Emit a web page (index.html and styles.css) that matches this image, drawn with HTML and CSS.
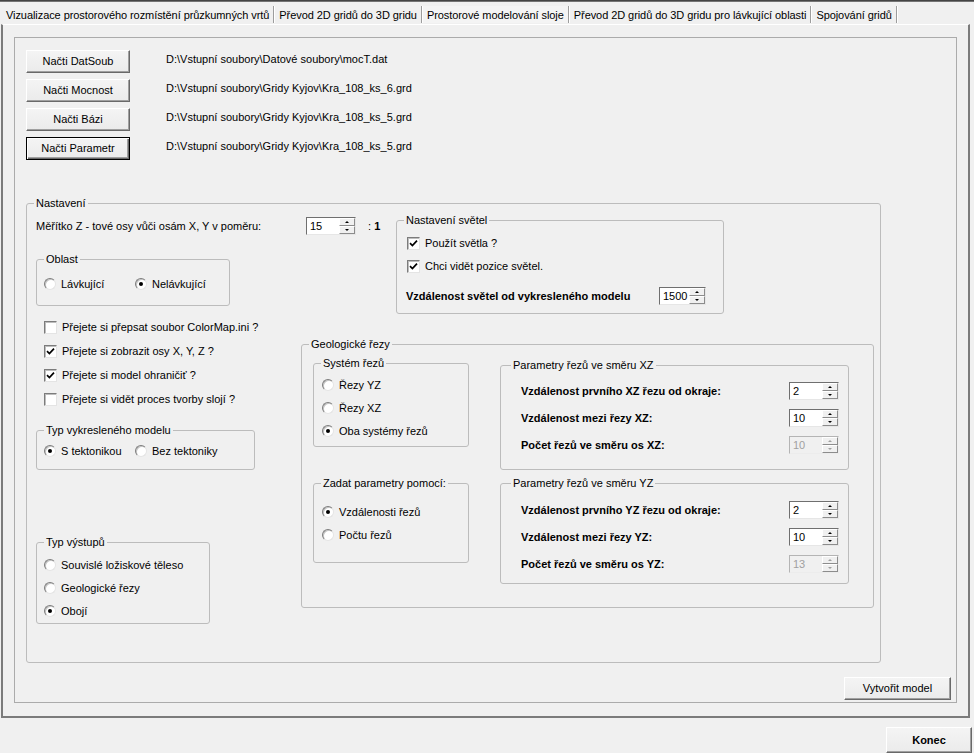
FILE: index.html
```html
<!DOCTYPE html>
<html lang="cs">
<head>
<meta charset="utf-8">
<title>Prostorové modelování sloje</title>
<link rel="stylesheet" href="styles.css">
</head>
<body>
<div class="topbar"></div>
<div class="tabs">
  <div class="tab">Vizualizace prostorového rozmístění průzkumných vrtů</div>
  <div class="tab">Převod 2D gridů do 3D gridu</div>
  <div class="tab active">Prostorové modelování sloje</div>
  <div class="tab">Převod 2D gridů do 3D gridu pro lávkující oblasti</div>
  <div class="tab">Spojování gridů</div>
</div>
<div class="page">
  <div class="panel">
    <div class="files">
      <div class="file-row"><button class="btn">Načti DatSoub</button><span class="path">D:\Vstupní soubory\Datové soubory\mocT.dat</span></div>
      <div class="file-row"><button class="btn">Načti Mocnost</button><span class="path">D:\Vstupní soubory\Gridy Kyjov\Kra_108_ks_6.grd</span></div>
      <div class="file-row"><button class="btn">Načti Bázi</button><span class="path">D:\Vstupní soubory\Gridy Kyjov\Kra_108_ks_5.grd</span></div>
      <div class="file-row"><button class="btn default">Načti Parametr</button><span class="path">D:\Vstupní soubory\Gridy Kyjov\Kra_108_ks_5.grd</span></div>
    </div>

    <fieldset class="group nastaveni">
      <legend>Nastavení</legend>
      <div class="gbody nastaveni-body">
        <div class="row-a">
          <div class="left-a">
            <div class="scale-line">
              <span class="scale-label">Měřítko Z - tové osy vůči osám X, Y v poměru:</span>
              <div class="num w50"><span class="num-val">15</span><span class="spin"><span class="up"></span><span class="down"></span></span></div>
              <span class="ratio">: <b>1</b></span>
            </div>
            <fieldset class="group oblast">
              <legend>Oblast</legend>
              <div class="gbody oblast-body">
                <label class="opt w91"><span class="radio"></span>Lávkující</label>
                <label class="opt"><span class="radio on"></span>Nelávkující</label>
              </div>
            </fieldset>
          </div>
          <fieldset class="group svetla">
            <legend>Nastavení světel</legend>
            <div class="gbody svetla-body">
              <label class="opt"><span class="check"><svg width="9" height="9" viewBox="0 0 9 9"><path d="M1 4.2 L3.4 6.6 L8 1.6" stroke="#000" stroke-width="1.7" fill="none"/></svg></span>Použít světla ?</label>
              <label class="opt gap5"><span class="check"><svg width="9" height="9" viewBox="0 0 9 9"><path d="M1 4.2 L3.4 6.6 L8 1.6" stroke="#000" stroke-width="1.7" fill="none"/></svg></span>Chci vidět pozice světel.</label>
              <div class="dist-row">
                <b class="dist-label">Vzdálenost světel od vykresleného modelu</b>
                <div class="num w47"><span class="num-val">1500</span><span class="spin"><span class="up"></span><span class="down"></span></span></div>
              </div>
            </div>
          </fieldset>
        </div>

        <div class="row-b">
          <div class="left-b">
            <div class="checks">
              <label class="opt"><span class="check"></span>Přejete si přepsat soubor ColorMap.ini ?</label>
              <label class="opt"><span class="check"><svg width="9" height="9" viewBox="0 0 9 9"><path d="M1 4.2 L3.4 6.6 L8 1.6" stroke="#000" stroke-width="1.7" fill="none"/></svg></span>Přejete si zobrazit osy X, Y, Z ?</label>
              <label class="opt"><span class="check"><svg width="9" height="9" viewBox="0 0 9 9"><path d="M1 4.2 L3.4 6.6 L8 1.6" stroke="#000" stroke-width="1.7" fill="none"/></svg></span>Přejete si model ohraničiť ?</label>
              <label class="opt"><span class="check"></span>Přejete si vidět proces tvorby slojí ?</label>
            </div>
            <fieldset class="group typ-model">
              <legend>Typ vykresleného modelu</legend>
              <div class="gbody typ-model-body">
                <label class="opt w91"><span class="radio on"></span>S tektonikou</label>
                <label class="opt"><span class="radio"></span>Bez tektoniky</label>
              </div>
            </fieldset>
            <fieldset class="group typ-vystup">
              <legend>Typ výstupů</legend>
              <div class="gbody stack typ-vystup-body">
                <label class="opt"><span class="radio"></span>Souvislé ložiskové těleso</label>
                <label class="opt"><span class="radio"></span>Geologické řezy</label>
                <label class="opt"><span class="radio on"></span>Obojí</label>
              </div>
            </fieldset>
          </div>

          <fieldset class="group geo">
            <legend>Geologické řezy</legend>
            <div class="gbody geo-body">
              <div class="geo-left">
                <fieldset class="group system">
                  <legend>Systém řezů</legend>
                  <div class="gbody stack system-body">
                    <label class="opt"><span class="radio"></span>Řezy YZ</label>
                    <label class="opt"><span class="radio"></span>Řezy XZ</label>
                    <label class="opt"><span class="radio on"></span>Oba systémy řezů</label>
                  </div>
                </fieldset>
                <fieldset class="group zadat">
                  <legend>Zadat parametry pomocí:</legend>
                  <div class="gbody stack zadat-body">
                    <label class="opt"><span class="radio on"></span>Vzdálenosti řezů</label>
                    <label class="opt"><span class="radio"></span>Počtu řezů</label>
                  </div>
                </fieldset>
              </div>
              <div class="geo-right">
                <fieldset class="group param xz">
                  <legend>Parametry řezů ve směru XZ</legend>
                  <div class="gbody param-body xz-body">
                    <div class="param-row"><b class="param-label">Vzdálenost prvního XZ řezu od okraje:</b><div class="num w50"><span class="num-val">2</span><span class="spin"><span class="up"></span><span class="down"></span></span></div></div>
                    <div class="param-row"><b class="param-label">Vzdálenost mezi řezy XZ:</b><div class="num w50"><span class="num-val">10</span><span class="spin"><span class="up"></span><span class="down"></span></span></div></div>
                    <div class="param-row"><b class="param-label">Počet řezů ve směru os XZ:</b><div class="num w50 disabled"><span class="num-val">10</span><span class="spin"><span class="up"></span><span class="down"></span></span></div></div>
                  </div>
                </fieldset>
                <fieldset class="group param yz">
                  <legend>Parametry řezů ve směru YZ</legend>
                  <div class="gbody param-body yz-body">
                    <div class="param-row"><b class="param-label">Vzdálenost prvního YZ řezu od okraje:</b><div class="num w50"><span class="num-val">2</span><span class="spin"><span class="up"></span><span class="down"></span></span></div></div>
                    <div class="param-row"><b class="param-label">Vzdálenost mezi řezy YZ:</b><div class="num w50"><span class="num-val">10</span><span class="spin"><span class="up"></span><span class="down"></span></span></div></div>
                    <div class="param-row"><b class="param-label">Počet řezů ve směru os YZ:</b><div class="num w50 disabled"><span class="num-val">13</span><span class="spin"><span class="up"></span><span class="down"></span></span></div></div>
                  </div>
                </fieldset>
              </div>
            </div>
          </fieldset>
        </div>
      </div>
    </fieldset>

    <div class="actions"><button class="btn create">Vytvořit model</button></div>
  </div>
</div>
<div class="footer"><button class="btn konec">Konec</button></div>
</body>
</html>
```

FILE: styles.css
```css
* { box-sizing: border-box; }
html, body { margin: 0; padding: 0; }
body {
  width: 974px;
  height: 753px;
  overflow: hidden;
  background: #f0f0f0;
  font: 11px/13px "Liberation Sans", Arial, sans-serif;
  color: #000;
}

/* ---------- window top + tabs ---------- */
.topbar {
  height: 2px;
  background: linear-gradient(#2c2c2c, #8c8c8c);
}
.tabs {
  display: flex;
  height: 22px;
  padding-left: 2px;
}
.tab {
  margin-top: 4px;
  height: 17px;
  padding: 3px 4px 0 4px;
  line-height: 13px;
  letter-spacing: -0.07px;
  white-space: nowrap;
  border-right: 1px solid #9d9d9d;
  box-shadow: 1px 0 0 #fff;
  margin-right: 1px;
}
.tab.active { background: #f4f4f4; }

/* ---------- tab page + panel ---------- */
.page {
  margin-left: 1px;
  width: 969px;
  height: 694px;
  border-top: 1px solid #fff;
  border-left: 2px solid #7b7b7b;
  border-right: 2px solid #7b7b7b;
  border-bottom: 2px solid #7b7b7b;
  padding: 12px 0 0 11px;
}
.panel {
  width: 943px;
  height: 666px;
  border: 1px solid #ababab;
  padding: 12px 0 0 11px;
}

/* ---------- buttons ---------- */
.btn {
  font: inherit;
  color: #000;
  width: 104px;
  height: 23px;
  padding: 0;
  background: linear-gradient(#f4f4f4, #ebebeb);
  border: 1px solid;
  border-color: #fff #696969 #696969 #fff;
  box-shadow: inset -1px -1px 0 #a0a0a0;
}
.btn.default {
  border: 1px solid #000;
  box-shadow: inset 1px 1px 0 #fff, inset -1px -1px 0 #696969, inset -2px -2px 0 #a0a0a0;
}

.files { display: flex; flex-direction: column; gap: 6px; }
.file-row { display: flex; align-items: center; height: 23px; }
.path { margin-left: 36px; margin-bottom: 5px; }

/* ---------- group boxes ---------- */
.group {
  margin: 0;
  padding: 0;
  border: 1px solid #bcbcbc;
  border-radius: 3px;
  min-width: 0;
}
.group > legend {
  padding: 0 2px;
  margin-left: 7px;
  line-height: 14px;
  font-size: 11px;
}
.stack { display: flex; flex-direction: column; gap: 5px; }

.nastaveni { margin-top: 36px; width: 855px; height: 467px; }
.nastaveni-body { padding: 3px 0 0 9px; }

.row-a { display: flex; align-items: flex-start; }
.left-a { width: 360px; }
.scale-line { display: flex; align-items: center; height: 18px; margin-top: 4px; }
.scale-label { width: 270px; }
.ratio { margin-left: 12px; }

.oblast { margin-top: 17px; width: 194px; height: 54px; }
.oblast-body { display: flex; padding: 9px 0 0 7px; }

.svetla { width: 328px; height: 101px; }
.svetla-body { padding: 7px 0 0 10px; }
.gap5 { margin-top: 5px; }
.dist-row { display: flex; align-items: center; height: 18px; margin: 12px 0 0 -1px; }
.dist-label { width: 253px; }

.row-b { display: flex; align-items: flex-start; }
.left-b { width: 265px; }
.checks { display: flex; flex-direction: column; gap: 6px; margin-top: 4px; padding-left: 8px; }

.typ-model { margin-top: 15px; width: 219px; height: 47px; }
.typ-model-body { display: flex; padding: 5px 0 0 7px; }
.typ-vystup { margin-top: 65px; width: 174px; height: 89px; }
.typ-vystup-body { padding: 7px 0 0 7px; }

.geo { margin-top: 23px; width: 573px; height: 271px; }
.geo-body { display: flex; align-items: flex-start; padding: 5px 0 0 11px; }
.geo-left { width: 156px; }
.system { width: 156px; height: 91px; }
.system-body { padding: 6px 0 0 8px; }
.zadat { margin-top: 29px; width: 156px; height: 87px; }
.zadat-body { padding: 13px 0 0 8px; }

.geo-right { margin: 2px 0 0 31px; }
.param { width: 349px; }
.param > legend { margin-left: 10px; }
.xz { height: 112px; }
.yz { margin-top: 6px; height: 108px; }
.param-body { display: flex; flex-direction: column; gap: 9px; padding-left: 20px; }
.xz-body { padding-top: 10px; }
.yz-body { padding-top: 11px; }
.param-row { display: flex; align-items: center; height: 18px; }
.param-label { width: 268px; }

/* ---------- options ---------- */
.opt { display: flex; align-items: center; height: 18px; gap: 5px; white-space: nowrap; }
.w91 { width: 91px; }

.radio {
  flex: none;
  width: 12px;
  height: 12px;
  border-radius: 50%;
  background: #fff;
  border: 1px solid;
  border-color: #7c7c7c #e4e4e4 #e4e4e4 #7c7c7c;
  box-shadow: inset 1px 1px 0 #c4c4c4;
  display: flex;
  align-items: center;
  justify-content: center;
}
.radio.on::after {
  content: "";
  width: 4px;
  height: 4px;
  border-radius: 50%;
  background: #000;
}
.check {
  flex: none;
  width: 13px;
  height: 13px;
  background: #fff;
  border: 1px solid;
  border-color: #7c7c7c #e4e4e4 #e4e4e4 #7c7c7c;
  box-shadow: inset 1px 1px 0 #bdbdbd;
  display: flex;
  align-items: center;
  justify-content: center;
}

/* ---------- numeric up-down ---------- */
.num {
  display: flex;
  height: 18px;
  background: #fff;
  border: 1px solid;
  border-color: #6f6f6f #e6e6e6 #e6e6e6 #6f6f6f;
}
.w50 { width: 50px; }
.w47 { width: 47px; }
.num-val { flex: 1; padding-left: 3px; line-height: 16px; white-space: nowrap; overflow: hidden; }
.spin { width: 16px; display: flex; flex-direction: column; }
.spin > span {
  flex: 1;
  background: #f0f0f0;
  border: 1px solid;
  border-color: #fff #8c8c8c #8c8c8c #fff;
  display: flex;
  align-items: center;
  justify-content: center;
}
.spin .up::after {
  content: "";
  border-left: 2px solid transparent;
  border-right: 2px solid transparent;
  border-bottom: 2px solid #000;
}
.spin .down::after {
  content: "";
  border-left: 2px solid transparent;
  border-right: 2px solid transparent;
  border-top: 2px solid #000;
}
.num.disabled { background: #f0f0f0; color: #a0a0a0; border-color: #b4b4b4 #ececec #ececec #b4b4b4; }
.num.disabled .up::after { border-bottom-color: #a0a0a0; }
.num.disabled .down::after { border-top-color: #a0a0a0; }

/* ---------- bottom buttons ---------- */
.actions { display: flex; justify-content: flex-end; margin-top: 14px; padding-right: 5px; }
.btn.create { width: 107px; }
.footer { display: flex; justify-content: flex-end; padding: 9px 2px 0 0; }
.btn.konec { width: 86px; height: 26px; font-weight: bold; }
```
